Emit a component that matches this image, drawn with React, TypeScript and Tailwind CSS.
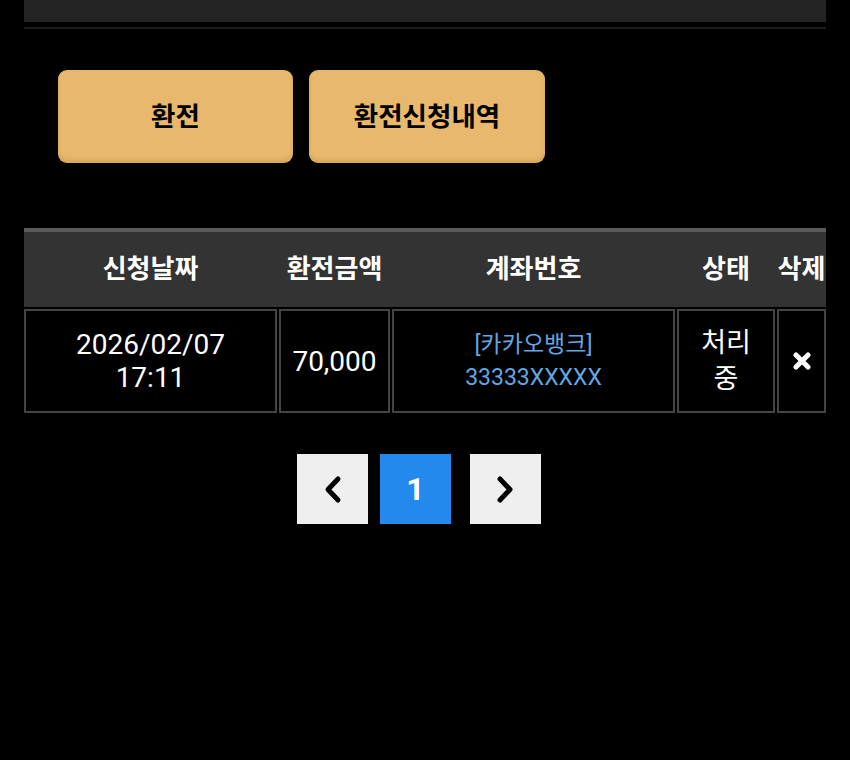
import React from "react";

interface ExchangeRequest {
  date: string;
  time: string;
  amount: string;
  bank: string;
  account: string;
  status: string;
}

const requests: ExchangeRequest[] = [
  {
    date: "2026/02/07",
    time: "17:11",
    amount: "70,000",
    bank: "[카카오뱅크]",
    account: "33333XXXXX",
    status: "처리 중",
  },
];

const cols = "grid grid-cols-[253px_111px_283px_98px_49px] gap-x-[2px]";

const Chevron = ({ dir }: { dir: "left" | "right" }) => (
  <svg width="19" height="29" viewBox="0 0 19 29" fill="none">
    <polyline
      points={dir === "left" ? "15,4 5,14.5 15,25" : "4,4 14,14.5 4,25"}
      stroke="#000"
      strokeWidth="5"
      strokeLinecap="round"
      strokeLinejoin="round"
    />
  </svg>
);

const DeleteIcon = () => (
  <svg width="18" height="18" viewBox="0 0 18 18">
    <path d="M3 3L15 15M15 3L3 15" stroke="#fff" strokeWidth="5" strokeLinecap="round" />
  </svg>
);

const App: React.FC = () => {
  return (
    <div className="min-h-[760px] bg-black font-['Roboto','Noto_Sans_CJK_KR',sans-serif] text-white">
      <div className="px-[24px]">
        {/* header strip */}
        <div className="h-[22px] bg-[#232323]" />
        <div className="mt-[5px] h-[2px] bg-[#1d1d1d]" />

        {/* tab buttons */}
        <div className="mt-[41px] flex gap-[16px] pl-[34px]">
          <button className="h-[93px] w-[235px] rounded-[9px] bg-[#e8b96c] text-[26.5px] font-bold text-black shadow-[inset_0_-3px_4px_rgba(120,70,0,0.18),0_2px_3px_rgba(0,0,0,0.4)]">
            환전
          </button>
          <button className="h-[93px] w-[236px] rounded-[9px] bg-[#e8b96c] text-[26.5px] font-bold text-black shadow-[inset_0_-3px_4px_rgba(120,70,0,0.18),0_2px_3px_rgba(0,0,0,0.4)]">
            환전신청내역
          </button>
        </div>

        {/* history table */}
        <div className="mt-[65px] w-[802px]">
          <div className={`${cols} h-[79px] items-center border-t-[4px] border-[#5a5a5a] bg-[#333333] text-[26px] font-bold whitespace-nowrap`}>
            <div className="text-center">신청날짜</div>
            <div className="text-center">환전금액</div>
            <div className="text-center">계좌번호</div>
            <div className="text-center">상태</div>
            <div className="text-center">삭제</div>
          </div>
          {requests.map((r, i) => (
            <div key={i} className={`${cols} mt-[2px] h-[104px] text-[28px] leading-[33px]`}>
              <div className="flex flex-col items-center justify-center border-2 border-[#444]">
                <span>{r.date}</span>
                <span>{r.time}</span>
              </div>
              <div className="flex items-center justify-center border-2 border-[#444]">{r.amount}</div>
              <div className="flex flex-col items-center justify-center border-2 border-[#444] text-[23px] leading-[33px] text-[#62a6e2]">
                <span>{r.bank}</span>
                <span>{r.account}</span>
              </div>
              <div className="flex items-center justify-center border-2 border-[#444] px-[20px] text-center text-[27px] leading-[36px]">
                {r.status}
              </div>
              <div className="flex items-center justify-center border-2 border-[#444]">
                <DeleteIcon />
              </div>
            </div>
          ))}
        </div>

        {/* pagination */}
        <div className="mt-[41px] flex pl-[273px]">
          <button className="flex h-[70px] w-[71px] items-center justify-center bg-[#efefef]">
            <Chevron dir="left" />
          </button>
          <button className="ml-[12px] flex h-[70px] w-[71px] items-center justify-center bg-[#2389ec] text-[32px] font-bold text-white">
            1
          </button>
          <button className="ml-[19px] flex h-[70px] w-[71px] items-center justify-center bg-[#efefef]">
            <Chevron dir="right" />
          </button>
        </div>
      </div>
    </div>
  );
};

export default App;
